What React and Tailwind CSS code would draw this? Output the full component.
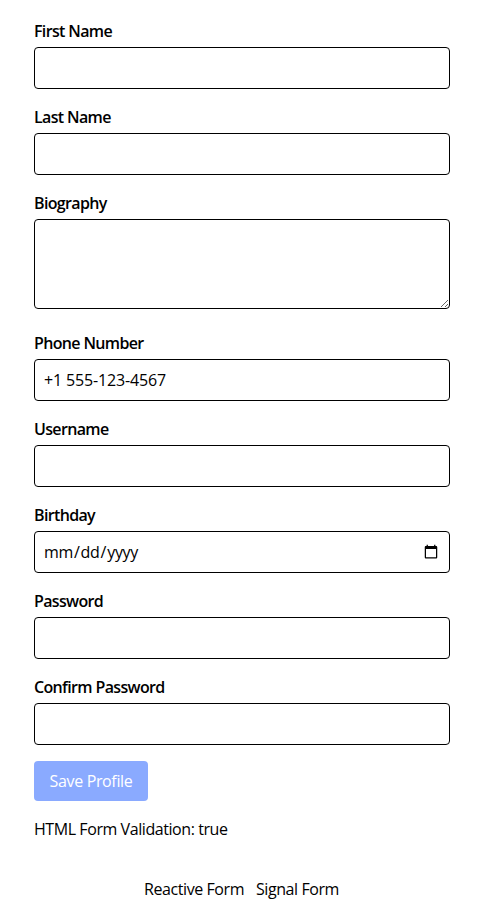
function Field({ label, children }) {
  return (
    <div className="mb-[18px]">
      <label className="block mb-[5px] text-base font-semibold leading-[21px] tracking-[-0.65px] text-black">{label}</label>
      {children}
    </div>
  );
}

const inputClass =
  "block w-full h-[42px] px-[9px] border border-black rounded-[4px] bg-white text-base text-black tracking-[-0.15px] outline-none";

export default function App() {
  return (
    <div className="bg-white min-h-[909px] pt-[21px] pl-[34px] pr-[30px] text-black font-['Open_Sans','Noto_Sans',sans-serif] tracking-[-0.43px]">
      <form>
        <Field label="First Name"><input type="text" className={inputClass} /></Field>
        <Field label="Last Name"><input type="text" className={inputClass} /></Field>
        <Field label="Biography">
          <textarea className="block w-full h-[90px] mb-[24px] px-[9px] py-2 border border-black rounded-[4px] bg-white text-base outline-none" />
        </Field>
        <Field label="Phone Number"><input type="text" defaultValue="+1 555-123-4567" className={inputClass} /></Field>
        <Field label="Username"><input type="text" className={inputClass} /></Field>
        <Field label="Birthday">
          <input type="date" className="block w-full h-[42px] px-[8px] border border-black rounded-[4px] bg-white text-base text-black tracking-[-0.3px] outline-none" />
        </Field>
        <Field label="Password"><input type="password" className={inputClass} /></Field>
        <Field label="Confirm Password"><input type="password" className={inputClass} /></Field>
        <button type="button" className="block -mt-[2px] w-[114px] h-10 rounded-[4px] bg-[#8aaaff] text-white text-base tracking-[-0.35px]">Save Profile</button>
      </form>
      <p className="mt-[18px] text-base leading-[21px]">HTML Form Validation: true</p>
      <div className="mt-[39px] flex justify-center gap-3 text-base leading-[21px] -ml-[1px]">
        <a>Reactive Form</a>
        <a>Signal Form</a>
      </div>
    </div>
  );
}
